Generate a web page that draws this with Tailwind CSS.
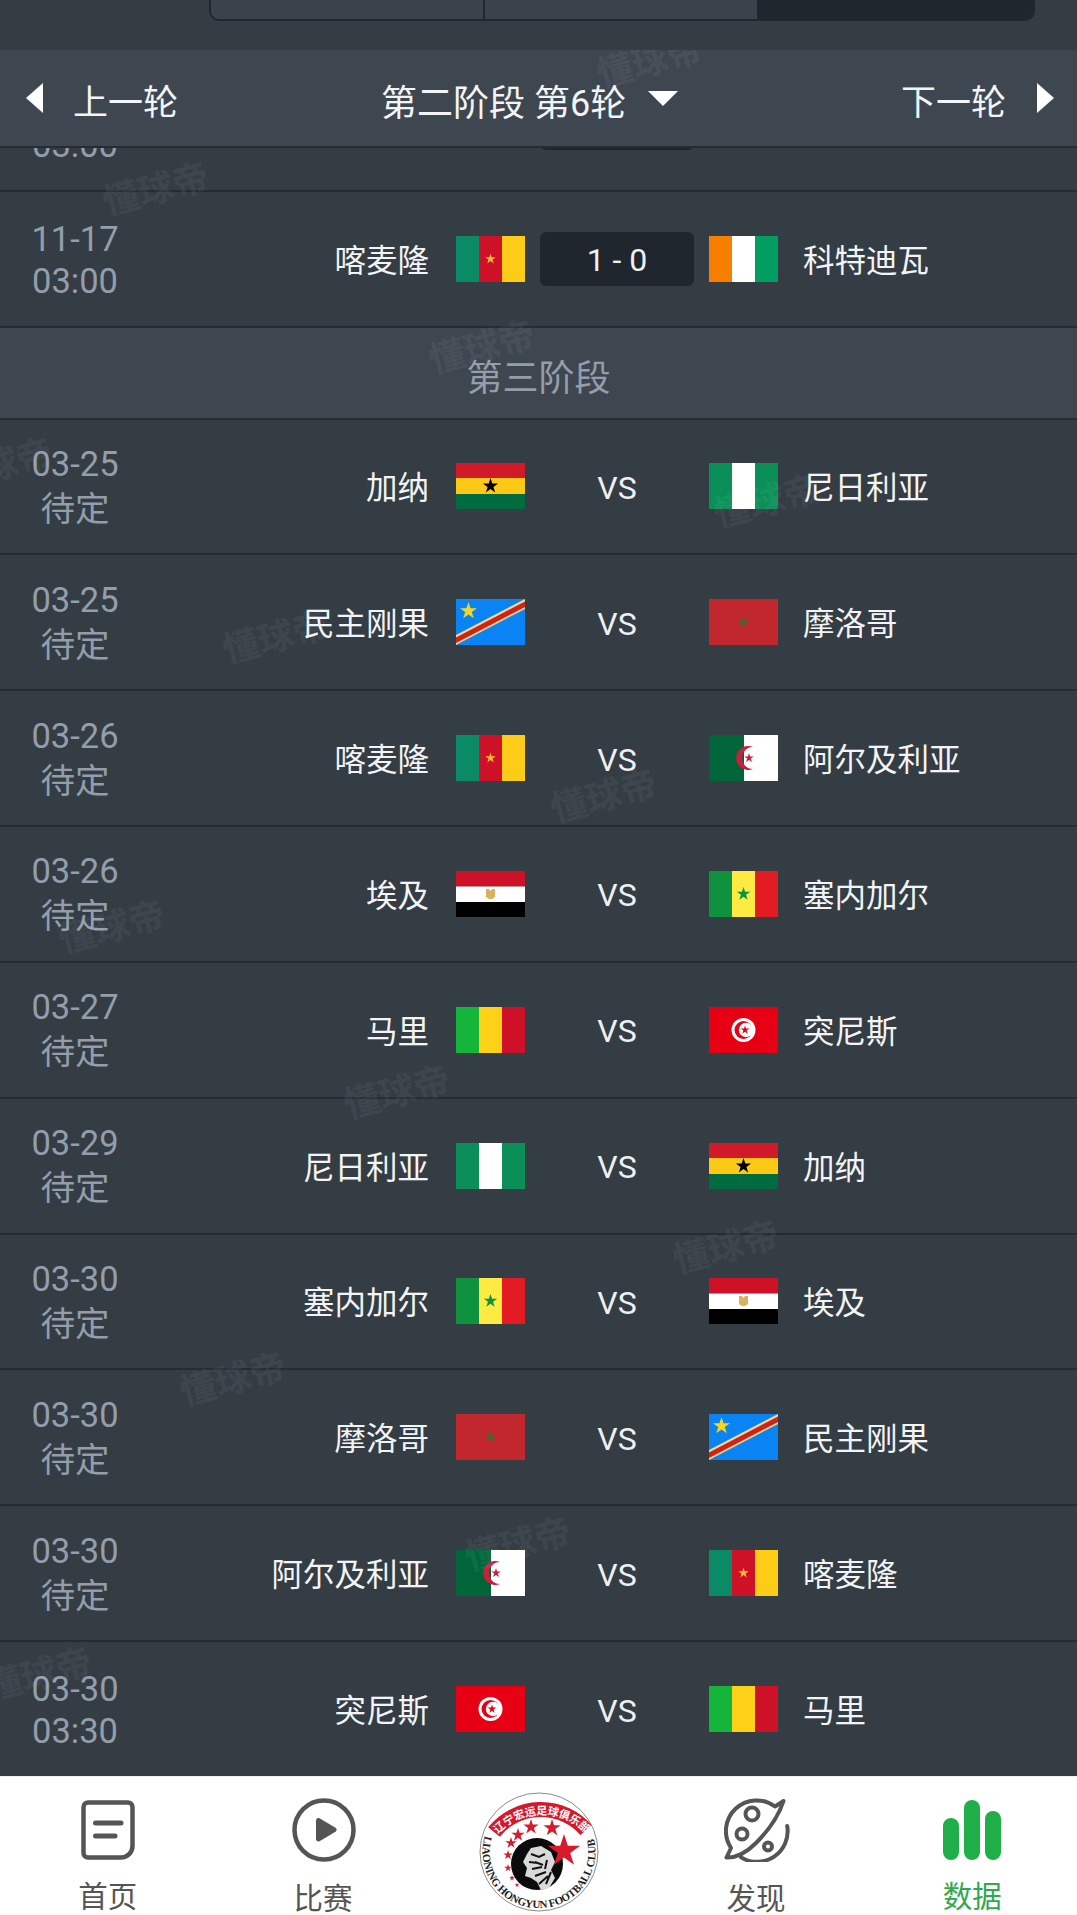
<!DOCTYPE html>
<html lang="zh">
<head>
    <meta charset="UTF-8">
    <meta name="viewport" content="width=device-width, initial-scale=1.0">
    <title>赛程</title>
    <script src="https://cdn.jsdelivr.net/npm/@tailwindcss/browser@4"></script>
</head>
<body class="w-[1077px] h-[1915px] overflow-hidden relative bg-[#343c44] font-[Roboto,'Noto_Sans_CJK_SC',sans-serif]">

    <!-- Flags -->
    <svg class="hidden" width="0" height="0">
        <defs>
            <polygon id="star" points="0,-1 .225,-.309 .951,-.309 .363,.118 .588,.809 0,.382 -.588,.809 -.363,.118 -.951,-.309 -.225,-.309"/>
            <symbol id="cmr" viewBox="0 0 69 46">
                <rect width="23" height="46" fill="#0b8a66"/><rect x="23" width="23" height="46" fill="#ce1126"/><rect x="46" width="23" height="46" fill="#fccc16"/>
                <use href="#star" transform="translate(34.5 23) scale(5.5)" fill="#fcb53a"/>
            </symbol>
            <symbol id="civ" viewBox="0 0 69 46">
                <rect width="23" height="46" fill="#f77f00"/><rect x="23" width="23" height="46" fill="#fff"/><rect x="46" width="23" height="46" fill="#009e60"/>
            </symbol>
            <symbol id="gha" viewBox="0 0 69 46">
                <rect width="69" height="15" fill="#d01a2a"/><rect y="15" width="69" height="16" fill="#fcc916"/><rect y="31" width="69" height="15" fill="#006b3f"/>
                <use href="#star" transform="translate(34.5 23) scale(8)" fill="#000"/>
            </symbol>
            <symbol id="nga" viewBox="0 0 69 46">
                <rect width="23" height="46" fill="#0a8f58"/><rect x="23" width="23" height="46" fill="#fff"/><rect x="46" width="23" height="46" fill="#0a8f58"/>
            </symbol>
            <symbol id="cod" viewBox="0 0 69 46">
                <rect width="69" height="46" fill="#0a84f5"/>
                <polygon points="0,36 69,0 69,10 0,46" fill="#f5d98a"/>
                <polygon points="0,38.5 69,2.5 69,8 0,44" fill="#d2201c"/>
                <use href="#star" transform="translate(12.5 12) scale(9)" fill="#f7d618"/>
            </symbol>
            <symbol id="mar" viewBox="0 0 69 46">
                <rect width="69" height="46" fill="#c1272d"/>
                <use href="#star" transform="translate(34.5 23) scale(6)" fill="#3f6b33"/>
            </symbol>
            <symbol id="alg" viewBox="0 0 69 46">
                <rect width="35" height="46" fill="#00663a"/><rect x="35" width="34" height="46" fill="#fff"/>
                <path d="M44 12 A12 12 0 1 0 44 34 A10 10 0 1 1 44 12Z" fill="#c8203f"/>
                <use href="#star" transform="translate(40 23) scale(5)" fill="#c8203f"/>
            </symbol>
            <symbol id="egy" viewBox="0 0 69 46">
                <rect width="69" height="15.5" fill="#ce1126"/><rect y="15.5" width="69" height="15.5" fill="#fff"/><rect y="31" width="69" height="15" fill="#000"/>
                <path d="M30 18h3l1.500 2 1.500-2h3v8l-3 2h-3l-3-2z" fill="#d9b25f"/>
            </symbol>
            <symbol id="sen" viewBox="0 0 69 46">
                <rect width="23" height="46" fill="#0f923f"/><rect x="23" width="23" height="46" fill="#fdeb42"/><rect x="46" width="23" height="46" fill="#e31b23"/>
                <use href="#star" transform="translate(34.500 23) scale(7)" fill="#0f923f"/>
            </symbol>
            <symbol id="mli" viewBox="0 0 69 46">
                <rect width="23" height="46" fill="#14b53a"/><rect x="23" width="23" height="46" fill="#fcd116"/><rect x="46" width="23" height="46" fill="#ce1126"/>
            </symbol>
            <symbol id="tun" viewBox="0 0 69 46">
                <rect width="69" height="46" fill="#e70013"/><circle cx="34.500" cy="23" r="12" fill="#fff"/>
                <circle cx="34.500" cy="23" r="9" fill="#e70013"/><circle cx="37" cy="23" r="7.200" fill="#fff"/>
                <use href="#star" transform="translate(36 23) scale(4.500)" fill="#e70013"/>
            </symbol>
        </defs>
    </svg>

    <!-- Tabs strip -->
    <div class="h-[50px] bg-[#343c44]">
        <div class="ml-[209px] w-[826px] h-[21px] flex overflow-hidden rounded-b-[10px] border-2 border-t-0 border-[#20272e]">
            <div class="w-[274px] bg-[#3a424b] border-r-2 border-[#20272e]"></div>
            <div class="w-[272px] bg-[#3a424b]"></div>
            <div class="flex-1 bg-[#1f262d]"></div>
        </div>
    </div>

    <!-- Round switcher -->
    <header class="relative z-10 h-[98px] pl-[26px] pr-[23px] flex items-center bg-[#3e4650] border-b-2 border-[#252c33] text-[35px] text-[#f2f4f5]">
        <div class="flex items-center">
            <svg width="17" height="30" viewBox="0 0 17 30"><polygon points="17,0 17,30 0,15" fill="#fff"/></svg>
            <span class="ml-[30px] mt-[12px]">上一轮</span>
        </div>
        <div class="ml-[203px] flex items-center">
            <span class="mt-[12px] text-[36px]">第二阶段 第6轮</span>
            <svg class="ml-[22px]" width="30" height="15" viewBox="0 0 30 15"><polygon points="0,0 30,0 15,15" fill="#fff"/></svg>
        </div>
        <div class="ml-auto flex items-center">
            <span class="mt-[12px]">下一轮</span>
            <svg class="ml-[31px]" width="17" height="30" viewBox="0 0 17 30"><polygon points="0,0 0,30 17,15" fill="#fff"/></svg>
        </div>
    </header>

    <!-- Match list -->
    <main id="list" class="-mt-[91.7px]"></main>

    <!-- Watermarks -->
    <div id="marks" class="absolute left-0 top-[50px] w-full h-[1726px] overflow-hidden pointer-events-none z-20"></div>

    <!-- Bottom nav -->
    <nav class="absolute left-0 top-[1776px] z-30 w-full h-[139px] bg-white border-t border-[#f0f0f0] grid grid-cols-5 text-[29.5px] leading-[30px] text-[#555555]">
        <div class="flex flex-col items-center">
            <svg class="mt-[23px]" width="54" height="60" viewBox="0 0 54 60" fill="none" stroke="#555" stroke-width="4.500" stroke-linecap="round">
                <path d="M7 2.500H47a4.500 4.500 0 0 1 4.500 4.500V46a11.500 11.500 0 0 1-11.500 11.500H7A4.500 4.500 0 0 1 2.500 53V7A4.500 4.500 0 0 1 7 2.500Z"/>
                <path d="M14.500 23H40M14.500 36H34" stroke-width="5"/>
            </svg>
            <span class="mt-[22px]">首页</span>
        </div>
        <div class="flex flex-col items-center">
            <svg class="mt-[21px] ml-[2px]" width="64" height="64" viewBox="0 0 64 64">
                <circle cx="32" cy="32" r="29.500" fill="none" stroke="#555" stroke-width="4.500"/>
                <path d="M24 22.500c0-2 2-3 3.500-2.200l16 9.500c1.500 1 1.500 3 0 4l-16 9.500c-1.500.8-3.500-.2-3.500-2.200Z" fill="#555"/>
            </svg>
            <span class="mt-[22px]">比赛</span>
        </div>
        <div class="flex justify-center">
            <svg class="mt-[15px] ml-[2px]" width="120" height="120" viewBox="0 0 120 120">
                <circle cx="60" cy="60" r="59" fill="#fff" stroke="#8a8a8a" stroke-width="1"/>
                <path d="M15 40 A60 60 0 0 1 107 38" fill="none" stroke="#d6182b" stroke-width="15"/>
                <path id="ringArc" d="M6 43 A56.500 56.500 0 1 0 114 43" fill="none"/>
                <path id="bannerText" d="M17 44 A60 60 0 0 1 107 42" fill="none"/>
                <text font-size="11" font-weight="700" fill="#fff" font-family="Noto Sans CJK SC, sans-serif"><textPath href="#bannerText" startOffset="3" textLength="98">辽宁宏运足球俱乐部</textPath></text>
                <text font-size="11" font-weight="700" fill="#222" font-family="Liberation Serif, serif"><textPath href="#ringArc" startOffset="1" textLength="206">LIAONING HONGYUN FOOTBALL CLUB</textPath></text>
                <circle cx="58" cy="72" r="26" fill="#0b0b0b"/>
                <path d="M52 56l10-2 10 6 4 10-4 8 4 8-6 10-8 2-4-8-6-4-6-2 2-8-4-6 4-8z" fill="#d9d9d9"/>
                <path d="M52 62l8 3 6-3M50 70l9 1M56 70l8 3M53 77l10-2M68 68l-2 9M56 84l11-4M60 92l9-8M72 80l-5 12" stroke="#111" stroke-width="2" fill="none"/>
                <g fill="#d81b2c">
                    <use href="#star" transform="translate(85 59) scale(17)"/>
                    <use href="#star" transform="translate(73 36) scale(9)"/>
                    <use href="#star" transform="translate(52 35) scale(8)"/>
                    <use href="#star" transform="translate(39 43) scale(7)"/>
                    <use href="#star" transform="translate(32 51) scale(6)"/>
                    <use href="#star" transform="translate(29 63) scale(5)"/>
                    <use href="#star" transform="translate(29 76) scale(4)"/>
                    <use href="#star" transform="translate(33 86) scale(3)"/>
                    <use href="#star" transform="translate(38 93) scale(2.500)"/>
                </g>
            </svg>
        </div>
        <div class="flex flex-col items-center">
            <svg class="mt-[21px] ml-[6px]" width="66" height="64" viewBox="0 0 66 64" fill="none" stroke="#555" stroke-width="4" stroke-linecap="round" stroke-linejoin="round">
                <path d="M59.500 3L51 8.500A30.700 30.700 0 0 0 7 50L2.500 59.500C14 60 24 53 32 45C44 33 54 20 59.500 3Z"/>
                <path d="M63.200 28A30.700 30.700 0 0 1 17 59.400"/>
                <circle cx="28" cy="16" r="6.500"/><circle cx="18" cy="36" r="5.500"/><circle cx="44" cy="48.500" r="4"/>
            </svg>
            <span class="mt-[22px] ml-[4px]">发现</span>
        </div>
        <div class="flex flex-col items-center text-[#2fa84f]">
            <div class="mt-[23px] h-[60px] flex items-end gap-[5px] ml-[6px]">
                <div class="w-[16px] h-[42px] rounded-full bg-[#1fae47]"></div>
                <div class="w-[16px] h-[60px] rounded-full bg-[#1fae47]"></div>
                <div class="w-[16px] h-[49px] rounded-full bg-[#1fae47]"></div>
            </div>
            <span class="mt-[22px] ml-[6px]">数据</span>
        </div>
    </nav>

    <script>
        // --- DATA ---
        const rows = [
            { date: '11-16', time: '03:00', home: '尼日利亚', homeFlag: 'nga', score: '0 - 0', away: '加纳', awayFlag: 'gha' },
            { date: '11-17', time: '03:00', home: '喀麦隆', homeFlag: 'cmr', score: '1 - 0', away: '科特迪瓦', awayFlag: 'civ' },
            { section: '第三阶段' },
            { date: '03-25', time: '待定', home: '加纳', homeFlag: 'gha', away: '尼日利亚', awayFlag: 'nga' },
            { date: '03-25', time: '待定', home: '民主刚果', homeFlag: 'cod', away: '摩洛哥', awayFlag: 'mar' },
            { date: '03-26', time: '待定', home: '喀麦隆', homeFlag: 'cmr', away: '阿尔及利亚', awayFlag: 'alg' },
            { date: '03-26', time: '待定', home: '埃及', homeFlag: 'egy', away: '塞内加尔', awayFlag: 'sen' },
            { date: '03-27', time: '待定', home: '马里', homeFlag: 'mli', away: '突尼斯', awayFlag: 'tun' },
            { date: '03-29', time: '待定', home: '尼日利亚', homeFlag: 'nga', away: '加纳', awayFlag: 'gha' },
            { date: '03-30', time: '待定', home: '塞内加尔', homeFlag: 'sen', away: '埃及', awayFlag: 'egy' },
            { date: '03-30', time: '待定', home: '摩洛哥', homeFlag: 'mar', away: '民主刚果', awayFlag: 'cod' },
            { date: '03-30', time: '待定', home: '阿尔及利亚', homeFlag: 'alg', away: '喀麦隆', awayFlag: 'cmr' },
            { date: '03-30', time: '03:30', home: '突尼斯', homeFlag: 'tun', away: '马里', awayFlag: 'mli' },
        ];

        // centre of each watermark, page coordinates
        const marks = [[650, 62], [156, 190], [482, 348], [0, 466], [767, 502], [276, 638], [604, 797], [112, 928], [397, 1093], [726, 1248], [233, 1380], [518, 1545], [39, 1675]];

        const flag = id => `<svg class="shrink-0" width="69" height="46"><use href="#${id}"/></svg>`;

        document.getElementById('list').innerHTML = rows.map(r => {
            if (r.section) {
                return `<div class="h-[91.5px] pt-[12px] flex items-center justify-center bg-[#3e4650] border-b-2 border-[#252c33] text-[36px] text-[#939eaa]">${r.section}</div>`;
            }
            const middle = r.score
                ? `<div class="w-[154px] h-[54px] pt-[2px] flex items-center justify-center rounded-md bg-[#1f262d] text-[#eef0f2] text-[32px]">${r.score}</div>`
                : `<span class="pt-[3px] text-[#eef0f2] text-[32px]">VS</span>`;
            // two digit lines sit a little closer together than date + 待定
            const leading = r.time.includes(':') ? 'leading-[42px]' : 'leading-[45px]';
            return `
                <div class="h-[135.85px] flex items-center border-b-2 border-[#252c33] text-[31.5px] text-[#f2f4f5]">
                    <div class="w-[150px] pt-[1px] text-center text-[34.500px] ${leading} text-[#939eaa]">${r.date}<br>${r.time}</div>
                    <div class="w-[279px] pt-[5px] text-right">${r.home}</div>
                    <div class="ml-[27px]">${flag(r.homeFlag)}</div>
                    <div class="w-[184px] flex justify-center">${middle}</div>
                    ${flag(r.awayFlag)}
                    <div class="ml-[25px] pt-[5px]">${r.away}</div>
                </div>`;
        }).join('');

        document.getElementById('marks').innerHTML = marks.map(([x, y]) =>
            `<span class="absolute -translate-x-1/2 -translate-y-1/2 -rotate-[15deg] whitespace-nowrap text-[36px] leading-none font-bold text-white/5" style="left:${x}px;top:${y - 50}px">懂球帝</span>`
        ).join('');
    </script>

</body>
</html>
